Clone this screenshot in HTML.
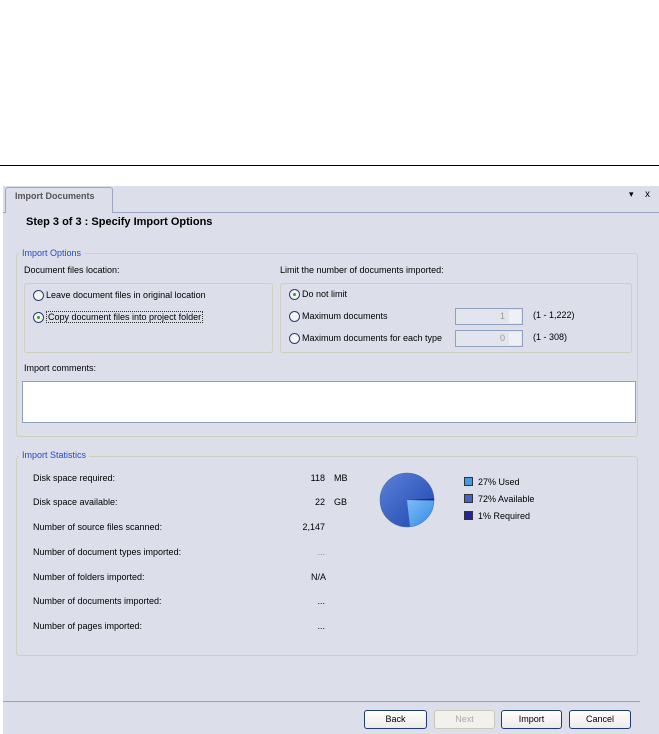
<!DOCTYPE html>
<html><head><style>
*{margin:0;padding:0;box-sizing:border-box}
body{width:659px;height:734px;background:#fff;position:relative;overflow:hidden;font-family:"Liberation Sans",sans-serif;font-size:9px;color:#000}
.a{position:absolute;white-space:nowrap}
.panel{position:absolute;left:3px;top:186px;width:656px;height:548px;background:#dcdee9}
.grp{position:absolute;border:1px solid #cfd0c0;border-radius:3px}
.leg{position:absolute;background:#dcdee9;color:#1f4ccc;padding:0 3px}
.rad{position:absolute;width:11px;height:11px;border-radius:50%;border:1px solid #2a3f6e;background:#f4f4f4}
.rad.on::after{content:"";position:absolute;left:3px;top:3px;width:3px;height:3px;border-radius:50%;background:#2aa02a}
.spin{position:absolute;width:68px;height:17px;border:1px solid #8ea2bf;background:#e3e5ee;color:#999;text-align:right;padding-right:17px;line-height:15px}
.spin::after{content:"";position:absolute;right:1px;top:1px;width:12px;height:13px;background:#eef0f4}
.btn{position:absolute;top:710px;height:19px;border:1px solid #1d3a7a;border-radius:3px;background:linear-gradient(#fff,#ecebe6);text-align:center;line-height:17px}
.sq{position:absolute;width:9px;height:9px;border:1px solid #333}
</style></head><body>
<div class="a" style="left:0;top:165px;width:659px;height:1px;background:#000"></div>
<div class="panel"></div>
<div class="a" style="left:3px;top:212px;width:656px;height:1px;background:#9aa6c4"></div>
<div class="a" style="left:5px;top:187px;width:108px;height:26px;background:#dcdee9;border:1px solid #9aa6c4;border-bottom:none;border-radius:3px 3px 0 0"></div>
<div class="a" style="left:15px;top:191px;font-weight:bold;color:#555;font-size:9px">Import Documents</div>
<div class="a" style="left:629px;top:189px;font-size:9px">▾</div>
<div class="a" style="left:645px;top:189px;font-size:10px">x</div>
<div class="a" style="left:26px;top:216px;font-weight:bold;font-size:11px">Step 3 of 3 :  Specify Import Options</div>

<div class="grp" style="left:16px;top:253px;width:622px;height:184px"></div>
<div class="leg" style="left:19px;top:248px">Import Options</div>
<div class="a" style="left:24px;top:265px">Document files location:</div>
<div class="grp" style="left:24px;top:283px;width:249px;height:70px"></div>
<div class="rad" style="left:33px;top:290px"></div>
<div class="a" style="left:46px;top:290px">Leave document files in original location</div>
<div class="rad on" style="left:33px;top:312px"></div>
<div class="a" style="left:46px;top:311px;border:1px dotted #333;padding:0 1px">Copy document files into project folder</div>
<div class="a" style="left:280px;top:265px">Limit the number of documents imported:</div>
<div class="grp" style="left:280px;top:283px;width:352px;height:70px"></div>
<div class="rad on" style="left:289px;top:289px"></div>
<div class="a" style="left:302px;top:289px">Do not limit</div>
<div class="rad" style="left:289px;top:311px"></div>
<div class="a" style="left:302px;top:311px">Maximum documents</div>
<div class="spin" style="left:455px;top:308px">1</div>
<div class="a" style="left:533px;top:310px">(1 - 1,222)</div>
<div class="rad" style="left:289px;top:333px"></div>
<div class="a" style="left:302px;top:333px">Maximum documents for each type</div>
<div class="spin" style="left:455px;top:330px">0</div>
<div class="a" style="left:533px;top:332px">(1 - 308)</div>
<div class="a" style="left:24px;top:363px">Import comments:</div>
<div class="a" style="left:22px;top:381px;width:614px;height:42px;background:#fff;border:1px solid #8ea2bf"></div>

<div class="grp" style="left:16px;top:456px;width:622px;height:200px"></div>
<div class="leg" style="left:19px;top:450px">Import Statistics</div>
<div class="a" style="left:33px;top:473px">Disk space required:</div>
<div class="a" style="left:33px;top:497px">Disk space available:</div>
<div class="a" style="left:33px;top:522px">Number of source files scanned:</div>
<div class="a" style="left:33px;top:547px">Number of document types imported:</div>
<div class="a" style="left:33px;top:572px">Number of folders imported:</div>
<div class="a" style="left:33px;top:596px">Number of documents imported:</div>
<div class="a" style="left:33px;top:621px">Number of pages imported:</div>
<div class="a" style="left:250px;width:75px;text-align:right;top:473px">118</div>
<div class="a" style="left:250px;width:75px;text-align:right;top:497px">22</div>
<div class="a" style="left:250px;width:75px;text-align:right;top:522px">2,147</div>
<div class="a" style="left:250px;width:75px;text-align:right;top:547px;color:#888">...</div>
<div class="a" style="left:250px;width:76px;text-align:right;top:572px">N/A</div>
<div class="a" style="left:250px;width:75px;text-align:right;top:596px">...</div>
<div class="a" style="left:250px;width:75px;text-align:right;top:621px">...</div>
<div class="a" style="left:334px;top:473px">MB</div>
<div class="a" style="left:334px;top:497px">GB</div>
<svg class="a" style="left:379px;top:472px" width="56" height="56" viewBox="0 0 56 56">
<defs><linearGradient id="g" x1="0" y1="0" x2="1" y2="1"><stop offset="0" stop-color="#5a82d8"/><stop offset="1" stop-color="#1f44b0"/></linearGradient>
<linearGradient id="h" x1="0" y1="0" x2="1" y2="1"><stop offset="0" stop-color="#7fbcf5"/><stop offset="1" stop-color="#2f8ae6"/></linearGradient></defs>
<circle cx="28" cy="28" r="27" fill="url(#g)" stroke="#5070a0" stroke-width="0.6"/>
<path d="M28 28 L55 26.5 A27 27 0 0 1 33 54.5 Z" fill="#1a2890"/>
<path d="M28 28 L55 28.5 A27 27 0 0 1 31 54.8 Z" fill="url(#h)"/>
</svg>
<div class="sq" style="left:464px;top:477px;background:#3d9be9"></div>
<div class="a" style="left:478px;top:477px">27% Used</div>
<div class="sq" style="left:464px;top:494px;background:#3f63c8"></div>
<div class="a" style="left:478px;top:494px">72% Available</div>
<div class="sq" style="left:464px;top:511px;background:#22259a"></div>
<div class="a" style="left:478px;top:511px">1% Required</div>

<div class="a" style="left:3px;top:701px;width:637px;height:1px;background:#a0a0a0"></div>
<div class="btn" style="left:364px;width:63px">Back</div>
<div class="btn" style="left:434px;width:61px;color:#aaa;border-color:#cac8bb;background:#f2f1ec">Next</div>
<div class="btn" style="left:501px;width:61px">Import</div>
<div class="btn" style="left:569px;width:62px">Cancel</div>
</body></html>
